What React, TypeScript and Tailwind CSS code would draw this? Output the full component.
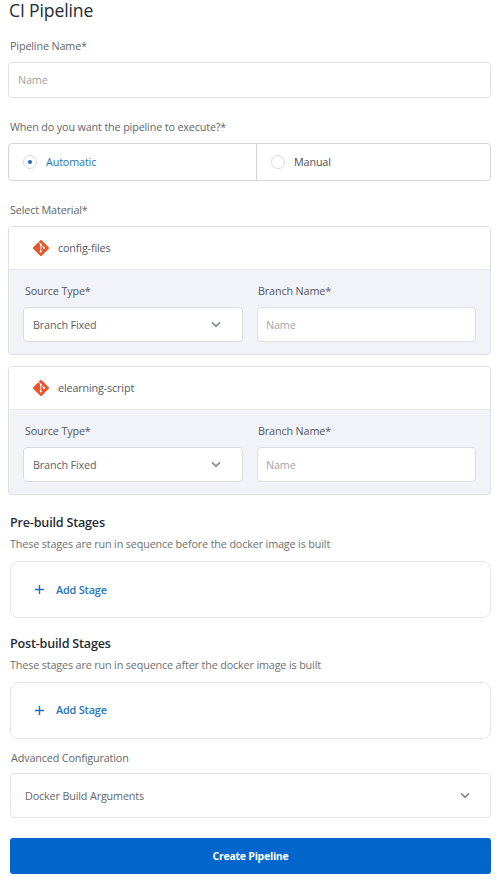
import React from "react";

function Chevron() {
  return (
    <svg width="10" height="7" viewBox="0 0 10 7" fill="none" className="shrink-0">
      <path d="M1 1.3 5 5.2 9 1.3" stroke="#8b8f94" strokeWidth="1.7" />
    </svg>
  );
}

function GitLogo() {
  return (
    <svg width="18" height="18" viewBox="0 0 18 18" className="shrink-0">
      <rect x="3" y="3" width="12" height="12" rx="1.1" fill="#ea552b" transform="rotate(45 9 9)" />
      <path d="M6.4 2.9 8.8 5.3V12.6M8.8 5.7 11.8 8.7" stroke="#fff" strokeWidth="0.9" fill="none" />
      <circle cx="8.8" cy="5.6" r="1" fill="#fff" />
      <circle cx="8.8" cy="12.5" r="1.1" fill="#fff" />
      <circle cx="11.9" cy="8.9" r="1.1" fill="#fff" />
    </svg>
  );
}

function Plus() {
  return (
    <svg width="9" height="9" viewBox="0 0 9 9" className="shrink-0">
      <path d="M4.5 0V9M0 4.5H9" stroke="#1b6fc7" strokeWidth="1.4" />
    </svg>
  );
}

function Material({ name, className }: { name: string; className: string }) {
  return (
    <section className={`flex h-[129px] flex-col overflow-hidden rounded border border-[#dcdfe4] bg-[#f2f3f8] ${className}`}>
      <div className="flex h-[43px] shrink-0 items-center gap-[8px] border-b border-[#e6e8ed] bg-white pl-[23px] text-[#55595f]">
        <GitLogo />
        <span>{name}</span>
      </div>
      <div className="grid grid-cols-[220px_219px] gap-x-[14px] pt-[13px] pl-[14px]">
        <label className="pl-0.5 text-[#55585d]">Source Type*</label>
        <label className="pl-px text-[#55585d]">Branch Name*</label>
        <div className="mt-2 flex h-[35px] items-center justify-between rounded border border-[#d9dbdf] bg-white pr-[21px] pl-[9px] text-[#5f6165]">
          Branch Fixed
          <Chevron />
        </div>
        <div className="mt-2 flex h-[35px] items-center rounded border border-[#dddfe3] bg-white pl-2 text-[#a3a5a9]">Name</div>
      </div>
    </section>
  );
}

function Stage({ title, text }: { title: string; text: string }) {
  return (
    <section className="ml-0.5">
      <h2 className="text-[12.6px] leading-5 font-semibold tracking-[-0.2px] text-[#252d38]">{title}</h2>
      <p className="mt-[3px] leading-4 text-[#6d7074]">{text}</p>
      <button className="mt-[9px] flex h-[57px] w-full items-center gap-3 rounded-lg border border-[#e5e7e8] pl-6 font-semibold text-[#2474c7]">
        <Plus />
        Add Stage
      </button>
    </section>
  );
}

export default function App() {
  return (
    <main className="h-[882px] w-[500px] overflow-hidden bg-white pr-[9px] pl-2 font-['Open_Sans',sans-serif] text-[10.8px] leading-4 tracking-[-0.15px]">
      <h1 className="ml-px h-[22px] text-[17.6px] leading-5 tracking-[-0.15px] text-[#252b36]">CI Pipeline</h1>

      <label className="mt-4 ml-0.5 block text-[#64666a]">Pipeline Name*</label>
      <div className="mt-2 flex h-9 items-center rounded border border-[#e0e1e3] pl-[9px] text-[#a0a1a3]">Name</div>

      <label className="mt-[21px] ml-0.5 block text-[#64666a]">When do you want the pipeline to execute?*</label>
      <div className="mt-2 flex h-[38px] rounded border border-[#d4d6d9]">
        <div className="flex w-[248px] items-center gap-[9px] border-r border-[#d4d6d9] pl-3.5 text-[#2776bd]">
          <span className="flex size-3.5 items-center justify-center rounded-full border border-[#d5d9dd]">
            <span className="size-1 rounded-full bg-[#1768b8]" />
          </span>
          Automatic
        </div>
        <div className="flex items-center gap-[9px] pl-3.5 text-[#4b4f56]">
          <span className="size-3.5 rounded-full border border-[#d9dbdd]" />
          Manual
        </div>
      </div>

      <label className="mt-[21px] ml-0.5 block text-[#64666a]">Select Material*</label>
      <Material name="config-files" className="mt-2" />
      <Material name="elearning-script" className="mt-[11px]" />

      <div className="mt-[18px] flex flex-col gap-[15.5px]">
        <Stage title="Pre-build Stages" text="These stages are run in sequence before the docker image is built" />
        <Stage title="Post-build Stages" text="These stages are run in sequence after the docker image is built" />
      </div>

      <label className="mt-[11px] ml-[3px] block text-[#64666a]">Advanced Configuration</label>
      <div className="mt-[7.5px] ml-0.5 flex h-[45px] items-center justify-between rounded border border-[#e3e6e9] pr-5 pl-[14px] text-[#64666a]">
        Docker Build Arguments
        <Chevron />
      </div>
      <button className="mt-5 ml-0.5 flex h-9 w-[481px] items-center justify-center rounded-[3px] bg-[#0066cc] text-[10.5px] font-bold tracking-[-0.25px] text-white">
        Create Pipeline
      </button>
    </main>
  );
}
